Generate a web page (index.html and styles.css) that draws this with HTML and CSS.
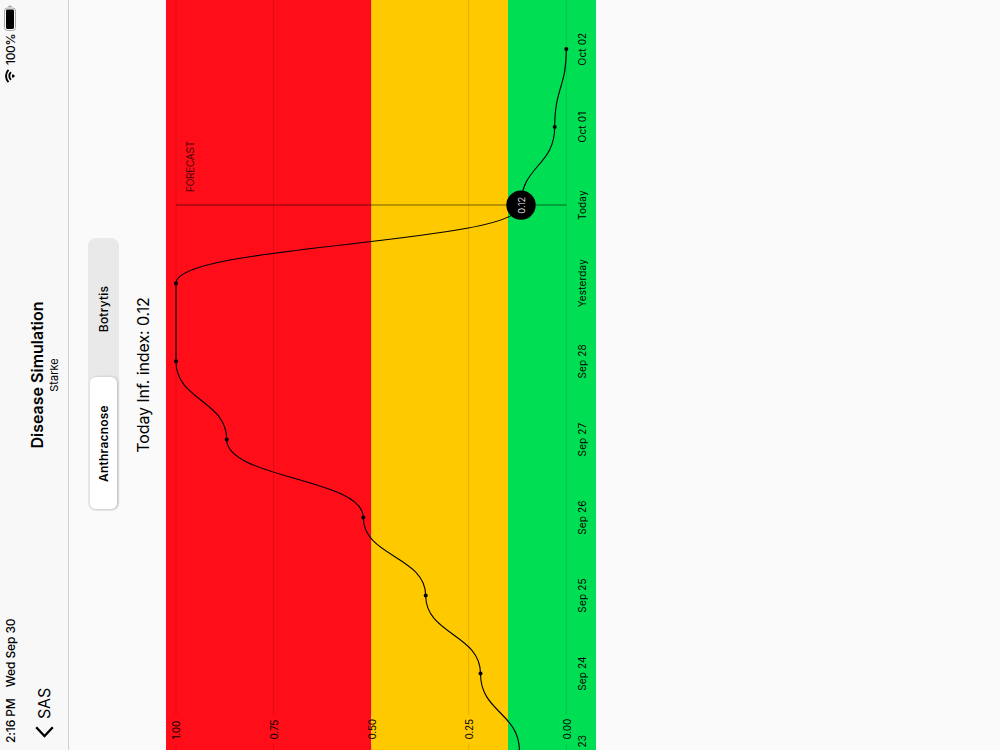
FILE: index.html
```html
<!DOCTYPE html>
<html lang="en">
  <head>
    <meta charset="UTF-8" />
    <meta name="viewport" content="width=device-width, initial-scale=1.0" />
    <title>Disease Simulation</title>
    <link rel="stylesheet" href="styles.css">
  </head>
  <body>
    <!-- Portrait screen, turned on its side -->
    <div class="screen">
      <header class="header">
        <div class="status-bar">
          <span class="time">2:16 PM</span>
          <span class="date">Wed Sep 30</span>
          <svg class="wifi" width="14" height="10" viewBox="0 0 14 10">
            <path d="M0.9 3.5a8.7 8.7 0 0 1 12.2 0" />
            <path d="M3.1 5.9a5.6 5.6 0 0 1 7.8 0" />
            <path class="wifi-dot" d="M4.9 7.9a3 3 0 0 1 4.2 0L7 10z" />
          </svg>
          <span class="percent">100%</span>
          <svg class="battery" width="26" height="12" viewBox="0 0 26 12">
            <rect class="battery-case" x="0.5" y="0.5" width="22.5" height="11" rx="3" />
            <rect x="2" y="2" width="19.5" height="8" rx="1.4" />
            <path class="battery-tip" d="M24 4v4q1.4-.6 1.4-2T24 4z" />
          </svg>
        </div>
        <div class="nav-bar">
          <a class="back" href="#">
            <svg width="12" height="19" viewBox="0 0 12 19">
              <path d="M10.8 1.2L2 9.5l8.8 8.3" />
            </svg>
            <span>SAS</span>
          </a>
          <div class="titles">
            <h1>Disease Simulation</h1>
            <p>Starke</p>
          </div>
        </div>
      </header>

      <main>
        <div class="segmented">
          <button type="button" class="segment active">Anthracnose</button>
          <button type="button" class="segment">Botrytis</button>
        </div>
        <h2>Today Inf. index: 0.12</h2>

        <svg class="chart" width="750" height="430" viewBox="0 0 750 430">
          <!-- Risk bands -->
          <rect class="high" width="750" height="205.3" />
          <rect class="medium" y="205.3" width="750" height="136.7" />
          <rect class="low" y="342" width="750" height="88" />

          <!-- Grid -->
          <path class="grid" d="M0 10H6M35 10H750M0 107.5H6M35 107.5H750M0 205.2H6M35 205.2H750M0 302.7H6M35 302.7H750M0 400.3H6M35 400.3H750" />
          <g class="y-labels">
            <text x="10.5" y="14">1.00</text>
            <text x="10.5" y="112">0.75</text>
            <text x="10.5" y="209.5">0.50</text>
            <text x="10.5" y="307">0.25</text>
            <text x="10.5" y="404.5">0.00</text>
          </g>

          <path class="today-line" d="M545 10V400.3" />
          <text class="forecast" x="558" y="28.3">FORECAST</text>

          <path class="line" d="M-1.5 353.5C37.5 353.5 37.5 314.5 76.5 314.5S115.5 259.7 154.5 259.7S193.5 197.3 232.5 197.3S271.5 60.7 310.5 60.7S349.5 10 388.7 10H466.8C505.8 10 505.8 355 544.9 355S584 388.7 623 388.7S662 400.3 701 400.3" />
          <g class="points">
            <circle cx="76.5" cy="314.5" r="2" />
            <circle cx="154.5" cy="259.7" r="2" />
            <circle cx="232.5" cy="197.3" r="2" />
            <circle cx="310.5" cy="60.7" r="2" />
            <circle cx="388.7" cy="10" r="2" />
            <circle cx="466.8" cy="10" r="2" />
            <circle cx="623" cy="388.7" r="2" />
            <circle cx="701" cy="400.3" r="2" />
            <circle cx="544.9" cy="355" r="14.7" />
          </g>
          <text class="today-value" x="544.9" y="358.7">0.12</text>

          <g class="x-labels">
            <text class="first" x="2.5" y="420">23</text>
            <text x="76.5" y="420">Sep 24</text>
            <text x="154.5" y="420">Sep 25</text>
            <text x="232.5" y="420">Sep 26</text>
            <text x="310.5" y="420">Sep 27</text>
            <text x="388.7" y="420">Sep 28</text>
            <text x="466.8" y="420">Yesterday</text>
            <text x="544.9" y="420">Today</text>
            <text x="623" y="420">Oct 01</text>
            <text x="701" y="420">Oct 02</text>
          </g>
        </svg>
      </main>
    </div>
  </body>
</html>
```

FILE: styles.css
```css
* {
  box-sizing: border-box;
}
html {
  height: 750px;
  overflow: hidden;
}
body {
  margin: 0;
  height: 750px;
  overflow: hidden;
  background-color: #fafafa;
  color: #000;
  font-family: Inter, "Liberation Sans", sans-serif;
}
.screen {
  width: 750px;
  height: 1000px;
  margin-bottom: -250px;
  transform-origin: 0 0;
  transform: translateY(750px) rotate(-90deg);
}
.header {
  height: 69px;
  background-color: #f8f8f8;
  border-bottom: 1px solid #cfcfcf;
}
.status-bar {
  display: flex;
  align-items: center;
  height: 20px;
  padding: 0 5px 0 7px;
  font-size: 12px;
  font-weight: 500;
  letter-spacing: -0.1px;
}
.date {
  margin-left: 11px;
}
.wifi {
  margin-left: auto;
  fill: none;
  stroke: #000;
  stroke-width: 1.9;
}
.wifi-dot {
  fill: #000;
  stroke: none;
}
.percent {
  margin: 0 3px 0 4px;
  letter-spacing: -0.35px;
}
.battery-case {
  fill: none;
  stroke: #a5a5a5;
}
.battery-tip {
  fill: #a5a5a5;
}
.nav-bar {
  display: grid;
  grid-template-columns: 1fr auto 1fr;
  height: 48px;
}
.back {
  display: flex;
  align-items: center;
  gap: 7px;
  padding-left: 12px;
  color: #000;
  font-size: 16px;
  letter-spacing: -0.2px;
  text-decoration: none;
}
.back path {
  fill: none;
  stroke: #000;
  stroke-width: 2.3;
}
.titles {
  padding-top: 7px;
  text-align: center;
}
h1 {
  margin: 0;
  font-size: 16px;
  font-weight: 600;
  line-height: 20px;
}
.titles p {
  margin: 0;
  font-size: 11px;
  line-height: 14px;
}
.segmented {
  display: flex;
  width: 273px;
  height: 31px;
  margin: 19px auto 0;
  padding: 2px;
  border-radius: 8px;
  background-color: #e9e9e9;
}
.segment {
  flex: 1;
  padding: 0;
  border: none;
  border-radius: 6px;
  background: none;
  color: #000;
  font: 500 12px Inter, "Liberation Sans", sans-serif;
  letter-spacing: 0.2px;
}
.segment.active {
  flex: 0 0 132px;
  background-color: #fff;
  font-weight: 600;
  box-shadow: 0 1px 3px rgba(0, 0, 0, 0.2);
}
h2 {
  margin: 14px 0 13px;
  font-size: 16px;
  font-weight: 400;
  letter-spacing: -0.1px;
  line-height: 20px;
  text-align: center;
}
.chart {
  display: block;
}
.high {
  fill: #ff0d18;
}
.medium {
  fill: #ffc900;
}
.low {
  fill: #00df53;
}
.grid {
  stroke: rgba(0, 0, 0, 0.12);
}
.y-labels,
.x-labels {
  font-size: 10px;
}
.y-labels {
  letter-spacing: -0.2px;
}
.x-labels {
  letter-spacing: 0.15px;
  text-anchor: middle;
}
.x-labels .first {
  text-anchor: start;
}
.today-line {
  stroke: rgba(0, 0, 0, 0.55);
  stroke-width: 1.2;
}
.forecast {
  font-size: 10px;
  letter-spacing: -0.25px;
  opacity: 0.7;
}
.line {
  fill: none;
  stroke: #000;
  stroke-width: 1.1;
}
.today-value {
  fill: #fff;
  font-size: 9.5px;
  font-weight: 300;
  text-anchor: middle;
}
```
